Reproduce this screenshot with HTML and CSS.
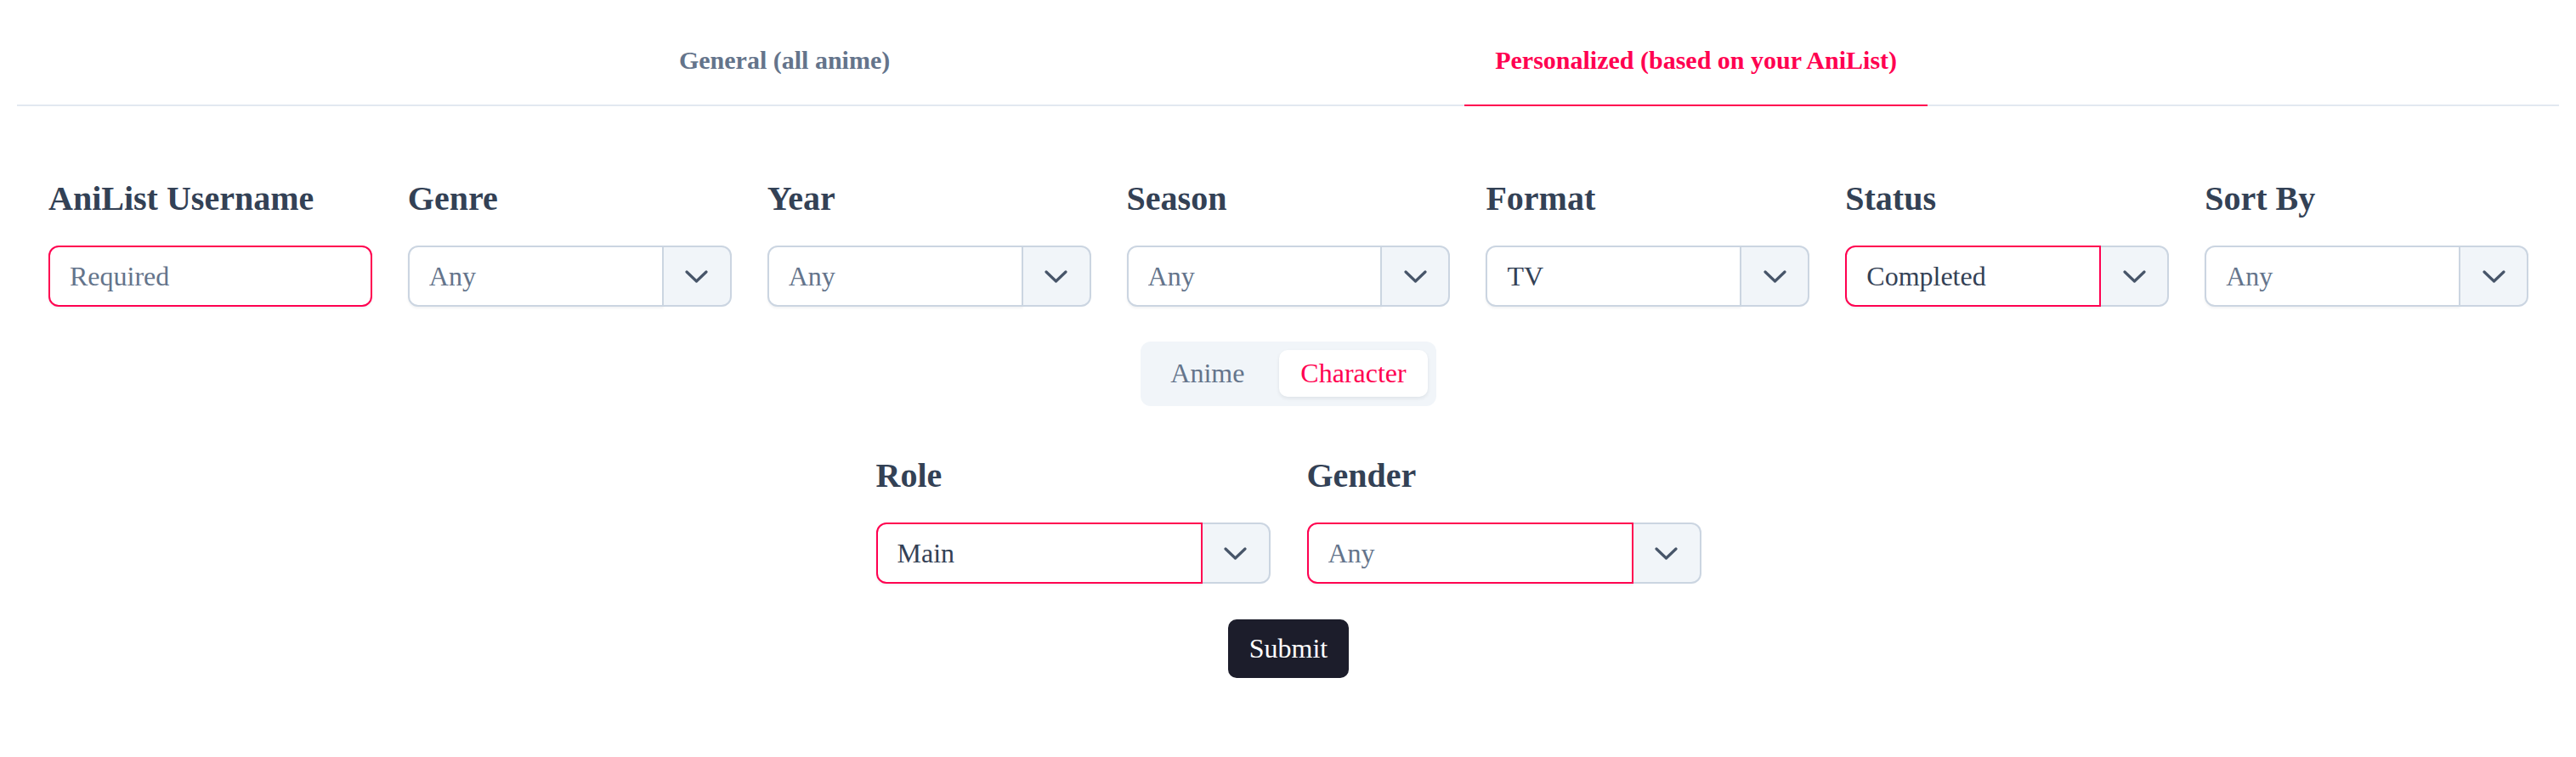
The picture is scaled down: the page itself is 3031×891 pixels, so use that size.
FILE: index.html
```html
<!DOCTYPE html>
<html lang="en">
<head>
  <meta charset="UTF-8">
  <title>Anime Recommender</title>
  <link rel="stylesheet" href="styles.css">
</head>
<body>
  <nav class="tabs">
    <a class="tab">General (all anime)</a>
    <a class="tab active">Personalized (based on your AniList)</a>
  </nav>

  <form class="panel">
    <div class="filters">
      <div class="field">
        <label>AniList Username</label>
        <input type="text" class="text-input" placeholder="Required">
      </div>
      <div class="field">
        <label>Genre</label>
        <div class="select-group">
          <select class="select empty"><option>Any</option></select>
          <span class="select-btn"><svg width="27" height="15" viewBox="0 0 27 15"><path d="M2 2 L13.5 13 L25 2" /></svg></span>
        </div>
      </div>
      <div class="field">
        <label>Year</label>
        <div class="select-group">
          <select class="select empty"><option>Any</option></select>
          <span class="select-btn"><svg width="27" height="15" viewBox="0 0 27 15"><path d="M2 2 L13.5 13 L25 2" /></svg></span>
        </div>
      </div>
      <div class="field">
        <label>Season</label>
        <div class="select-group">
          <select class="select empty"><option>Any</option></select>
          <span class="select-btn"><svg width="27" height="15" viewBox="0 0 27 15"><path d="M2 2 L13.5 13 L25 2" /></svg></span>
        </div>
      </div>
      <div class="field">
        <label>Format</label>
        <div class="select-group">
          <select class="select"><option>TV</option></select>
          <span class="select-btn"><svg width="27" height="15" viewBox="0 0 27 15"><path d="M2 2 L13.5 13 L25 2" /></svg></span>
        </div>
      </div>
      <div class="field">
        <label>Status</label>
        <div class="select-group">
          <select class="select picked"><option>Completed</option></select>
          <span class="select-btn"><svg width="27" height="15" viewBox="0 0 27 15"><path d="M2 2 L13.5 13 L25 2" /></svg></span>
        </div>
      </div>
      <div class="field">
        <label>Sort By</label>
        <div class="select-group">
          <select class="select empty"><option>Any</option></select>
          <span class="select-btn"><svg width="27" height="15" viewBox="0 0 27 15"><path d="M2 2 L13.5 13 L25 2" /></svg></span>
        </div>
      </div>
    </div>

    <div class="toggle">
      <button type="button" class="toggle-btn">Anime</button>
      <button type="button" class="toggle-btn active">Character</button>
    </div>

    <div class="filters character">
      <div class="field">
        <label>Role</label>
        <div class="select-group">
          <select class="select picked"><option>Main</option></select>
          <span class="select-btn"><svg width="27" height="15" viewBox="0 0 27 15"><path d="M2 2 L13.5 13 L25 2" /></svg></span>
        </div>
      </div>
      <div class="field">
        <label>Gender</label>
        <div class="select-group">
          <select class="select picked empty"><option>Any</option></select>
          <span class="select-btn"><svg width="27" height="15" viewBox="0 0 27 15"><path d="M2 2 L13.5 13 L25 2" /></svg></span>
        </div>
      </div>
    </div>

    <button type="submit" class="submit">Submit</button>
  </form>
</body>
</html>
```

FILE: styles.css
```css
body {
  margin: 0;
  padding: 20px 20px 0;
  font-family: "Liberation Serif", "Times New Roman", serif;
  color: #334155;
  background: #fff;
}
.tabs {
  display: flex;
  justify-content: center;
  gap: 640px;
  border-bottom: 2px solid #e2e8f0;
}
.tab {
  padding: 33px 36px 34px;
  line-height: 36px;
  font-size: 30px;
  font-weight: bold;
  color: #64748b;
  border-bottom: 2px solid transparent;
  margin-bottom: -2px;
  cursor: pointer;
}
.tab.active {
  color: #ff0050;
  border-bottom-color: #ff0050;
}
.panel {
  display: flex;
  flex-direction: column;
  align-items: center;
  padding: 0 36px 0 37px;
}
.filters {
  align-self: stretch;
  display: grid;
  grid-template-columns: repeat(7, 1fr);
  column-gap: 42px;
  margin-top: 85px;
}
.filters.character {
  align-self: center;
  grid-template-columns: repeat(2, 464px);
  column-gap: 43px;
  margin-top: 58px;
}
.field label {
  display: block;
  font-size: 40px;
  line-height: 48px;
  font-weight: bold;
  color: #334155;
  margin-bottom: 31px;
}
.text-input, .select {
  box-sizing: border-box;
  height: 72px;
  padding: 0 23px;
  font-family: inherit;
  font-size: 32px;
  color: #334155;
  background: #fff;
  border: 2px solid #cbd5e1;
  outline: none;
  box-shadow: 0 2px 3px rgba(15, 23, 42, 0.05);
}
.text-input {
  width: 100%;
  border-color: #ff0050;
  border-radius: 12px;
}
.text-input::placeholder {
  color: #64748b;
}
.select-group {
  display: flex;
  height: 72px;
}
.select {
  flex: 1;
  min-width: 0;
  appearance: none;
  -webkit-appearance: none;
  border-radius: 12px 0 0 12px;
}
.select.empty {
  color: #64748b;
}
.select.picked {
  border-color: #ff0050;
}
.select-btn {
  box-sizing: border-box;
  width: 80px;
  display: flex;
  align-items: center;
  justify-content: center;
  background: #f1f5f9;
  border: 2px solid #cbd5e1;
  border-left: none;
  border-radius: 0 12px 12px 0;
}
.select-btn path {
  fill: none;
  stroke: #475569;
  stroke-width: 3.2;
  stroke-linecap: round;
  stroke-linejoin: round;
}
.toggle {
  display: flex;
  gap: 16px;
  margin-top: 41px;
  padding: 10px 10px 11px;
  background: #f1f5f9;
  border-radius: 12px;
}
.toggle-btn {
  height: 55px;
  padding: 0 25px;
  font-family: inherit;
  font-size: 32px;
  color: #64748b;
  background: none;
  border: none;
  border-radius: 10px;
  cursor: pointer;
}
.toggle-btn.active {
  background: #fff;
  color: #ff0050;
  box-shadow: 0 2px 4px rgba(15, 23, 42, 0.08);
}
.submit {
  margin-top: 42px;
  height: 69px;
  padding: 0 25px;
  font-family: inherit;
  font-size: 32px;
  color: #fff;
  background: #1c1d2b;
  border: none;
  border-radius: 10px;
  cursor: pointer;
}
```
